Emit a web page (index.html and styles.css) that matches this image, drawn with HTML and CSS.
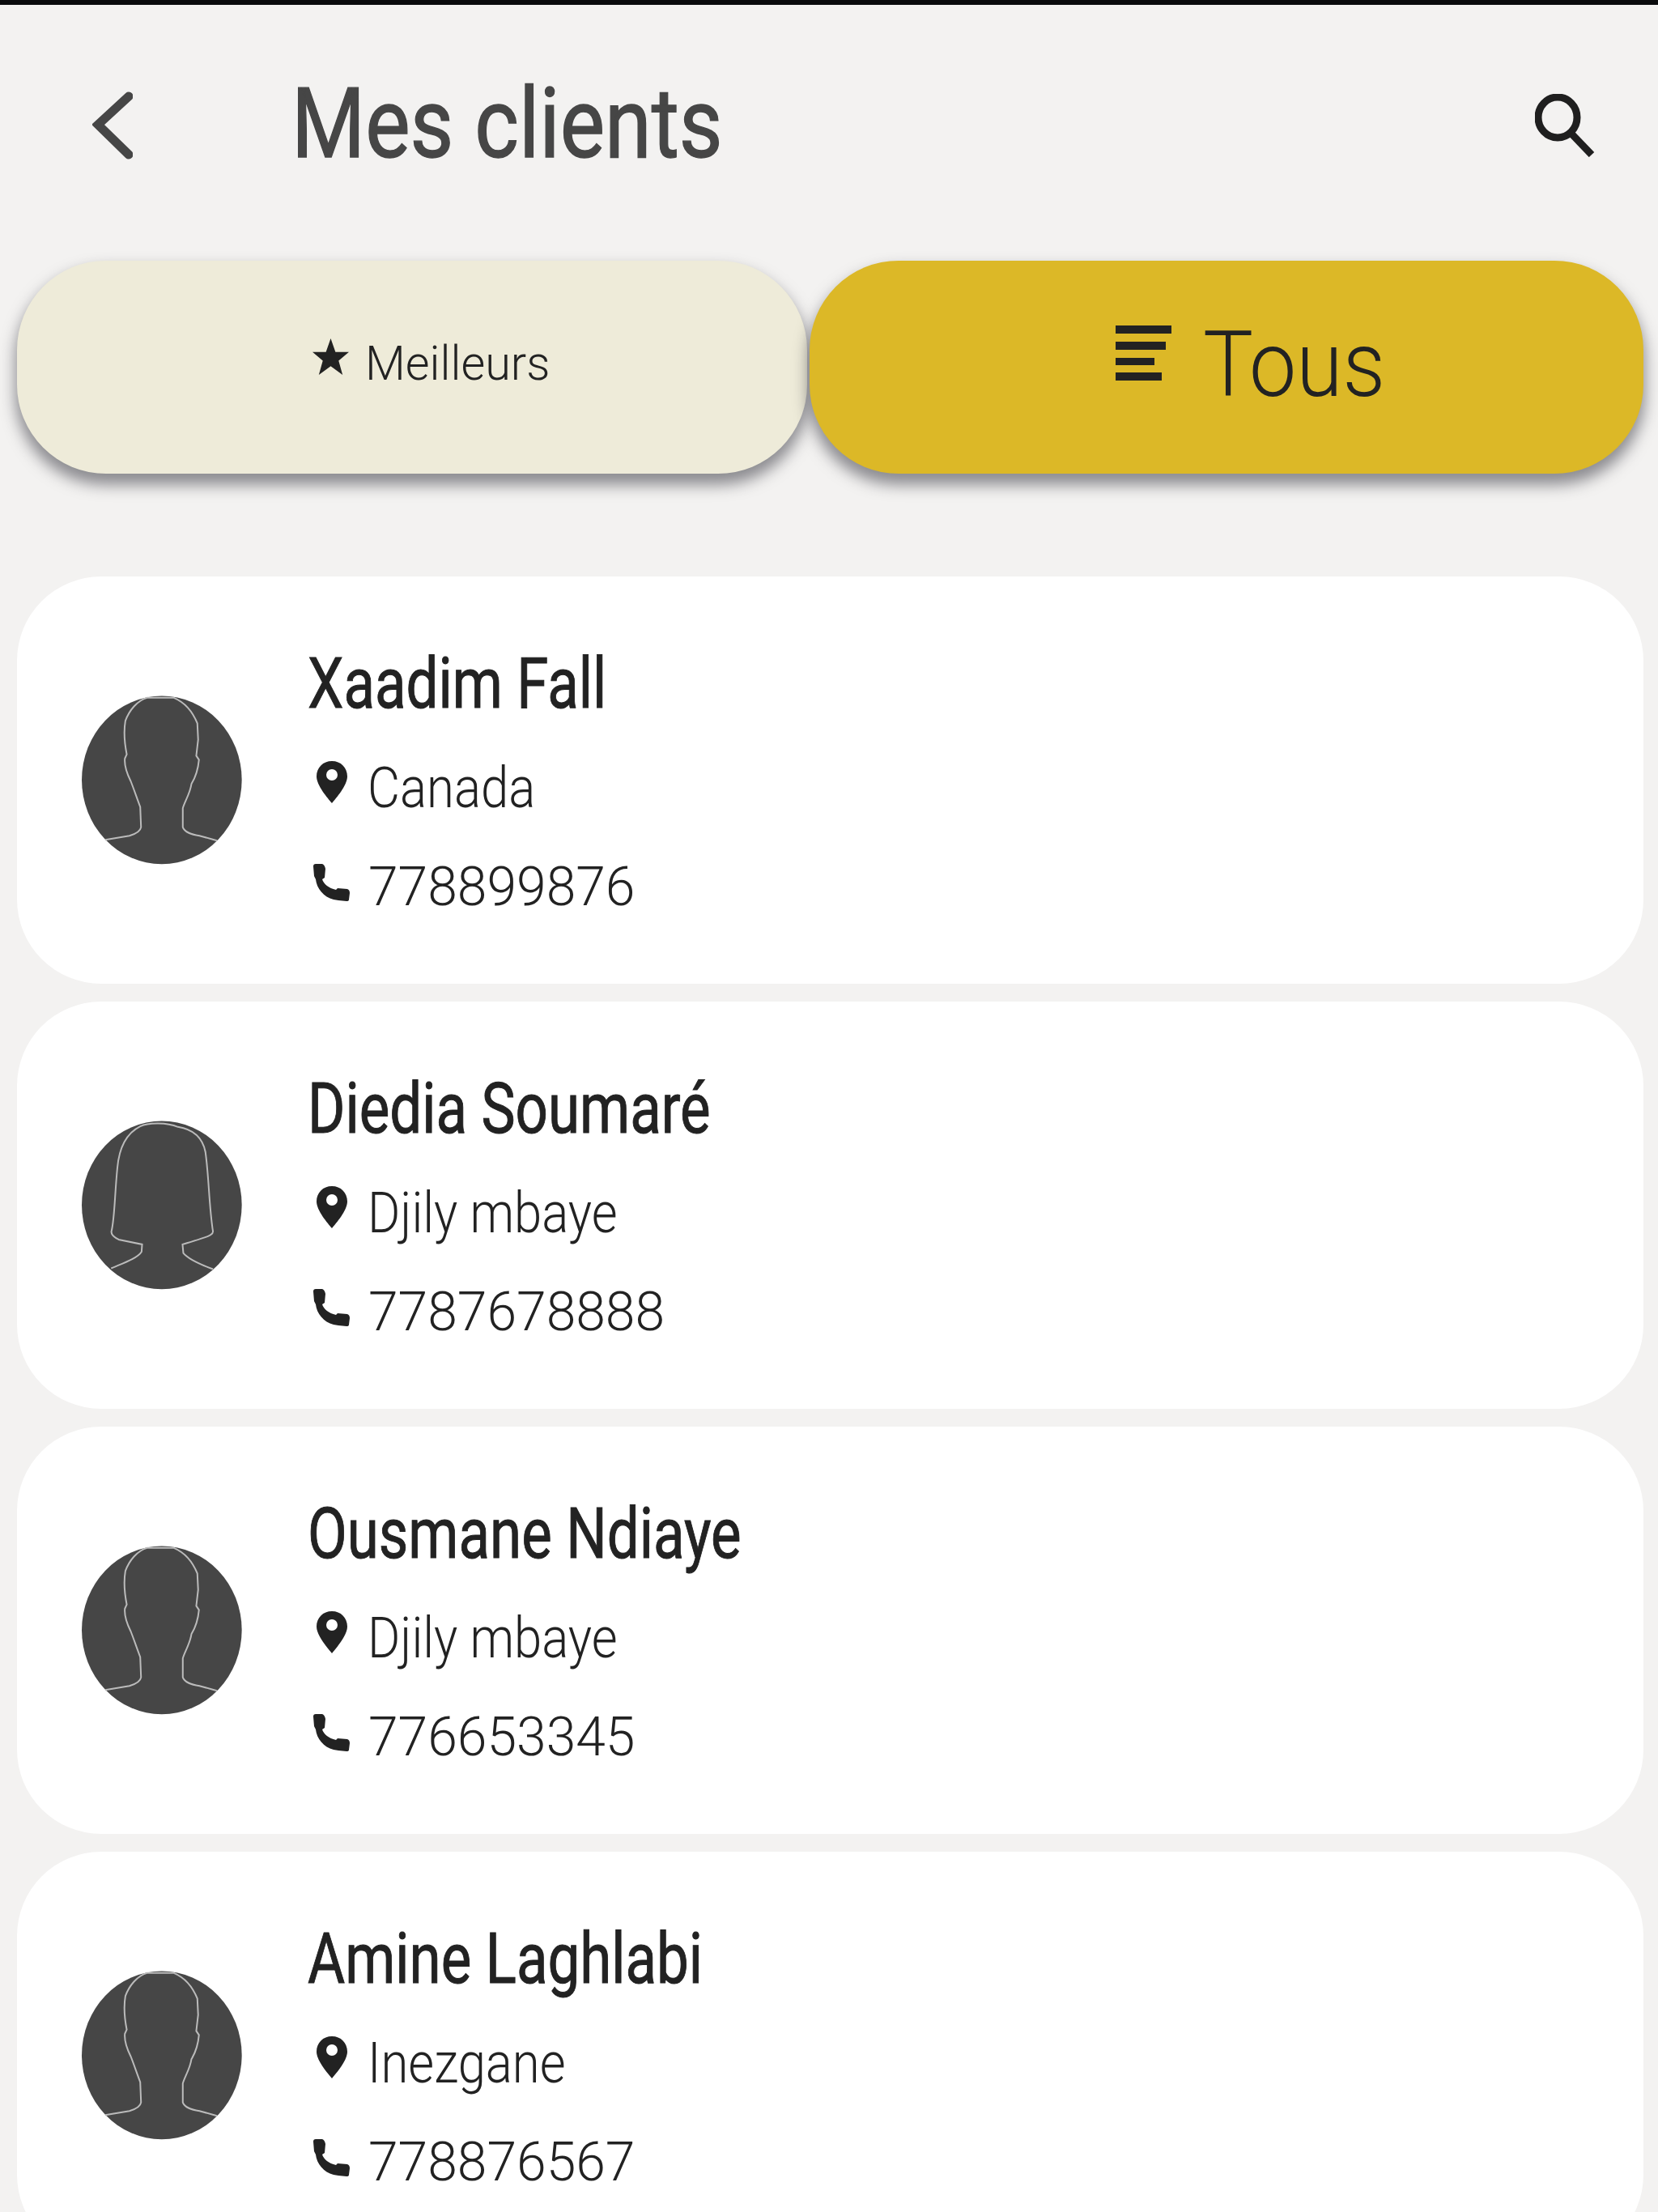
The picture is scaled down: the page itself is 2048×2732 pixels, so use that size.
FILE: index.html
```html
<!DOCTYPE html>
<html lang="fr">
<head>
    <meta charset="UTF-8">
    <meta name="viewport" content="width=device-width, initial-scale=1.0">
    <title>Mes clients</title>
    <link rel="stylesheet" href="styles.css">
</head>
<body>
    <div class="status-strip"></div>

    <header class="app-header">
        <svg class="back-icon" viewBox="0 0 50 90"><path d="M45 9 L7 44 L45 81"/></svg>
        <h1 class="page-title">Mes clients</h1>
        <svg class="search-icon" viewBox="0 0 74 78"><ellipse cx="28" cy="29" rx="24" ry="25"/><path d="M45 49 L70 75"/></svg>
    </header>

    <div class="tabs">
        <div class="tab tab-best">
            <svg class="star-icon" viewBox="0 0 46 46"><path d="M23 0 L29 17 L46 17 L33 28 L38 46 L23 35 L8 46 L13 28 L0 17 L17 17 Z"/></svg>
            <span class="tab-label-small">Meilleurs</span>
        </div>
        <div class="tab tab-all">
            <svg class="list-icon" viewBox="0 0 69 68"><path d="M0 0H69V10H0Z M0 20H62V30H0Z M0 40H48V49H0Z M0 58H57V68H0Z"/></svg>
            <span class="tab-label-big">Tous</span>
        </div>
    </div>

    <main class="client-list">
        <article class="client-card">
            <svg class="avatar" viewBox="123 58 595 625"><ellipse cx="420" cy="370" rx="297" ry="312"/><path d="M210 592 L300 577 Q340 565 343 545 L340 470 C325 430 315 400 305 375 C290 345 280 320 283 290 L290 275 C283 240 278 190 285 150 C300 110 330 75 365 65 L465 65 C500 80 530 105 552 160 L555 220 L548 280 L558 295 C555 330 545 360 530 385 C525 420 505 450 498 475 L498 545 C505 565 530 572 560 577 L625 595"/></svg>
            <div class="client-info">
                <h2 class="client-name">Xaadim Fall</h2>
                <div class="client-row">
                    <svg class="pin-icon" viewBox="0 0 38 52"><path fill-rule="evenodd" d="M19 0 C8 0 0 8 0 19 C0 30 14 46 19 52 C24 46 38 30 38 19 C38 8 30 0 19 0 Z M19 10 A7 7 0 1 1 19 24 A7 7 0 1 1 19 10 Z"/></svg>
                    <span class="client-place">Canada</span>
                </div>
                <div class="client-row">
                    <svg class="phone-icon" viewBox="0 0 47 46"><path d="M1 3 Q1 0 4 0 L12 0 Q15 1 16 6 L15 17 L12 19 C14 25 20 30 29 32 L31 30 L43 31 Q46 32 46 36 L45 44 Q45 46 42 46 L32 45 C30 45 28 44 26 44 C14 41 5 30 4 19 L2 15 Z"/></svg>
                    <span class="client-phone">778899876</span>
                </div>
            </div>
        </article>

        <article class="client-card">
            <svg class="avatar" viewBox="123 75 595 625"><ellipse cx="420" cy="387" rx="297" ry="312"/><path d="M232 622 C270 605 330 585 345 560 L347 533 L260 515 C240 505 232 495 233 485 C245 440 245 350 255 250 C262 170 290 120 340 95 C370 80 440 80 480 97 C530 105 570 130 582 190 C595 280 595 390 610 485 C610 500 590 505 497 533 L500 565 C520 590 570 610 610 625"/></svg>
            <div class="client-info">
                <h2 class="client-name">Diedia Soumaré</h2>
                <div class="client-row">
                    <svg class="pin-icon" viewBox="0 0 38 52"><path fill-rule="evenodd" d="M19 0 C8 0 0 8 0 19 C0 30 14 46 19 52 C24 46 38 30 38 19 C38 8 30 0 19 0 Z M19 10 A7 7 0 1 1 19 24 A7 7 0 1 1 19 10 Z"/></svg>
                    <span class="client-place">Djily mbaye</span>
                </div>
                <div class="client-row">
                    <svg class="phone-icon" viewBox="0 0 47 46"><path d="M1 3 Q1 0 4 0 L12 0 Q15 1 16 6 L15 17 L12 19 C14 25 20 30 29 32 L31 30 L43 31 Q46 32 46 36 L45 44 Q45 46 42 46 L32 45 C30 45 28 44 26 44 C14 41 5 30 4 19 L2 15 Z"/></svg>
                    <span class="client-phone">7787678888</span>
                </div>
            </div>
        </article>

        <article class="client-card">
            <svg class="avatar" viewBox="123 58 595 625"><ellipse cx="420" cy="370" rx="297" ry="312"/><path d="M210 592 L300 577 Q340 565 343 545 L340 470 C325 430 315 400 305 375 C290 345 280 320 283 290 L290 275 C283 240 278 190 285 150 C300 110 330 75 365 65 L465 65 C500 80 530 105 552 160 L555 220 L548 280 L558 295 C555 330 545 360 530 385 C525 420 505 450 498 475 L498 545 C505 565 530 572 560 577 L625 595"/></svg>
            <div class="client-info">
                <h2 class="client-name">Ousmane Ndiaye</h2>
                <div class="client-row">
                    <svg class="pin-icon" viewBox="0 0 38 52"><path fill-rule="evenodd" d="M19 0 C8 0 0 8 0 19 C0 30 14 46 19 52 C24 46 38 30 38 19 C38 8 30 0 19 0 Z M19 10 A7 7 0 1 1 19 24 A7 7 0 1 1 19 10 Z"/></svg>
                    <span class="client-place">Djily mbaye</span>
                </div>
                <div class="client-row">
                    <svg class="phone-icon" viewBox="0 0 47 46"><path d="M1 3 Q1 0 4 0 L12 0 Q15 1 16 6 L15 17 L12 19 C14 25 20 30 29 32 L31 30 L43 31 Q46 32 46 36 L45 44 Q45 46 42 46 L32 45 C30 45 28 44 26 44 C14 41 5 30 4 19 L2 15 Z"/></svg>
                    <span class="client-phone">776653345</span>
                </div>
            </div>
        </article>

        <article class="client-card">
            <svg class="avatar" viewBox="123 58 595 625"><ellipse cx="420" cy="370" rx="297" ry="312"/><path d="M210 592 L300 577 Q340 565 343 545 L340 470 C325 430 315 400 305 375 C290 345 280 320 283 290 L290 275 C283 240 278 190 285 150 C300 110 330 75 365 65 L465 65 C500 80 530 105 552 160 L555 220 L548 280 L558 295 C555 330 545 360 530 385 C525 420 505 450 498 475 L498 545 C505 565 530 572 560 577 L625 595"/></svg>
            <div class="client-info">
                <h2 class="client-name">Amine Laghlabi</h2>
                <div class="client-row">
                    <svg class="pin-icon" viewBox="0 0 38 52"><path fill-rule="evenodd" d="M19 0 C8 0 0 8 0 19 C0 30 14 46 19 52 C24 46 38 30 38 19 C38 8 30 0 19 0 Z M19 10 A7 7 0 1 1 19 24 A7 7 0 1 1 19 10 Z"/></svg>
                    <span class="client-place">Inezgane</span>
                </div>
                <div class="client-row">
                    <svg class="phone-icon" viewBox="0 0 47 46"><path d="M1 3 Q1 0 4 0 L12 0 Q15 1 16 6 L15 17 L12 19 C14 25 20 30 29 32 L31 30 L43 31 Q46 32 46 36 L45 44 Q45 46 42 46 L32 45 C30 45 28 44 26 44 C14 41 5 30 4 19 L2 15 Z"/></svg>
                    <span class="client-phone">778876567</span>
                </div>
            </div>
        </article>
    </main>
</body>
</html>
```

FILE: styles.css
```css
html, body {
    margin: 0;
    height: 2732px;
    overflow: hidden;
}
body {
    background-color: #f3f2f1;
    font-family: Roboto, "Open Sans", sans-serif;
    color: #222;
}
h1, h2 {
    margin: 0;
}
.status-strip {
    height: 6px;
    background-color: #0a0b0d;
}

/* Header */
.app-header {
    display: flex;
    align-items: center;
    height: 316px;
    padding: 0 78px 0 114px;
    box-sizing: border-box;
}
.back-icon {
    width: 50px;
    height: 90px;
    fill: none;
    stroke: #464646;
    stroke-width: 11;
    stroke-linecap: round;
    margin-top: -18px;
}
.page-title {
    flex: 1;
    margin: -22px 0 0 196px;
    font-size: 120px;
    line-height: 140px;
    font-weight: 400;
    -webkit-text-stroke: 1.4px #464646;
    color: #464646;
    transform: scaleX(.87);
    transform-origin: left center;
    white-space: nowrap;
}
.search-icon {
    width: 74px;
    height: 78px;
    fill: none;
    stroke: #1f1f1f;
    stroke-width: 9;
    margin-top: -18px;
}

/* Tabs */
.tabs {
    display: flex;
    gap: 3px;
    padding: 0 18px 0 21px;
}
.tab {
    display: flex;
    flex: none;
    align-items: center;
    height: 263px;
    border-radius: 110px;
    box-shadow: 0 12px 18px 2px rgba(40, 40, 50, 0.5);
    box-sizing: border-box;
}
.tab-best {
    width: 976px;
    background-color: #eeebd9;
    padding-left: 365px;
}
.tab-all {
    width: 1030px;
    background-color: #dcb827;
    padding-left: 378px;
}
.star-icon {
    width: 45px;
    height: 45px;
    fill: #222;
    margin: -26px 20px 0 0;
}
.tab-label-small {
    font-size: 60px;
    font-weight: 300;
    white-space: nowrap;
    margin-top: -10px;
    transform: scaleX(.96);
    transform-origin: left center;
}
.list-icon {
    width: 69px;
    height: 68px;
    fill: #222;
    margin: -36px 39px 0 0;
}
.tab-label-big {
    font-size: 113px;
    font-weight: 300;
    white-space: nowrap;
    margin-top: -6px;
    transform: scaleX(.92);
    transform-origin: left center;
}

/* Client cards */
.client-list {
    display: flex;
    flex-direction: column;
    gap: 22px;
    margin: 127px 18px 0 21px;
}
.client-card {
    display: flex;
    align-items: center;
    flex: none;
    height: 503px;
    padding-left: 80px;
    background-color: #fff;
    border-radius: 104px;
    box-sizing: border-box;
}
.avatar {
    flex: none;
    width: 198px;
    height: 209px;
    overflow: visible;
    fill: #464646;
}
.avatar path {
    fill: none;
    stroke: #bbb;
    stroke-width: 6;
}
.client-info {
    display: flex;
    flex-direction: column;
    margin: 18px 0 0 81px;
}
.client-name {
    font-size: 88px;
    line-height: 104px;
    font-weight: 400;
    -webkit-text-stroke: 1px #222;
    white-space: nowrap;
    transform: scaleX(.805);
    transform-origin: left center;
    margin: 2px 0 16px;
}
.client-row {
    display: flex;
    align-items: center;
    height: 122px;
}
.client-place {
    font-size: 70px;
    font-weight: 300;
    white-space: nowrap;
    transform: scaleX(.88);
    transform-origin: left center;
}
.client-phone {
    font-size: 67px;
    font-weight: 300;
    white-space: nowrap;
    transform: scaleX(.985);
    transform-origin: left center;
}
.pin-icon {
    width: 38px;
    height: 52px;
    fill: #222;
    margin: -14px 25px 0 11px;
}
.phone-icon {
    width: 47px;
    height: 46px;
    fill: #222;
    margin: -10px 22px 0 6px;
}
```
